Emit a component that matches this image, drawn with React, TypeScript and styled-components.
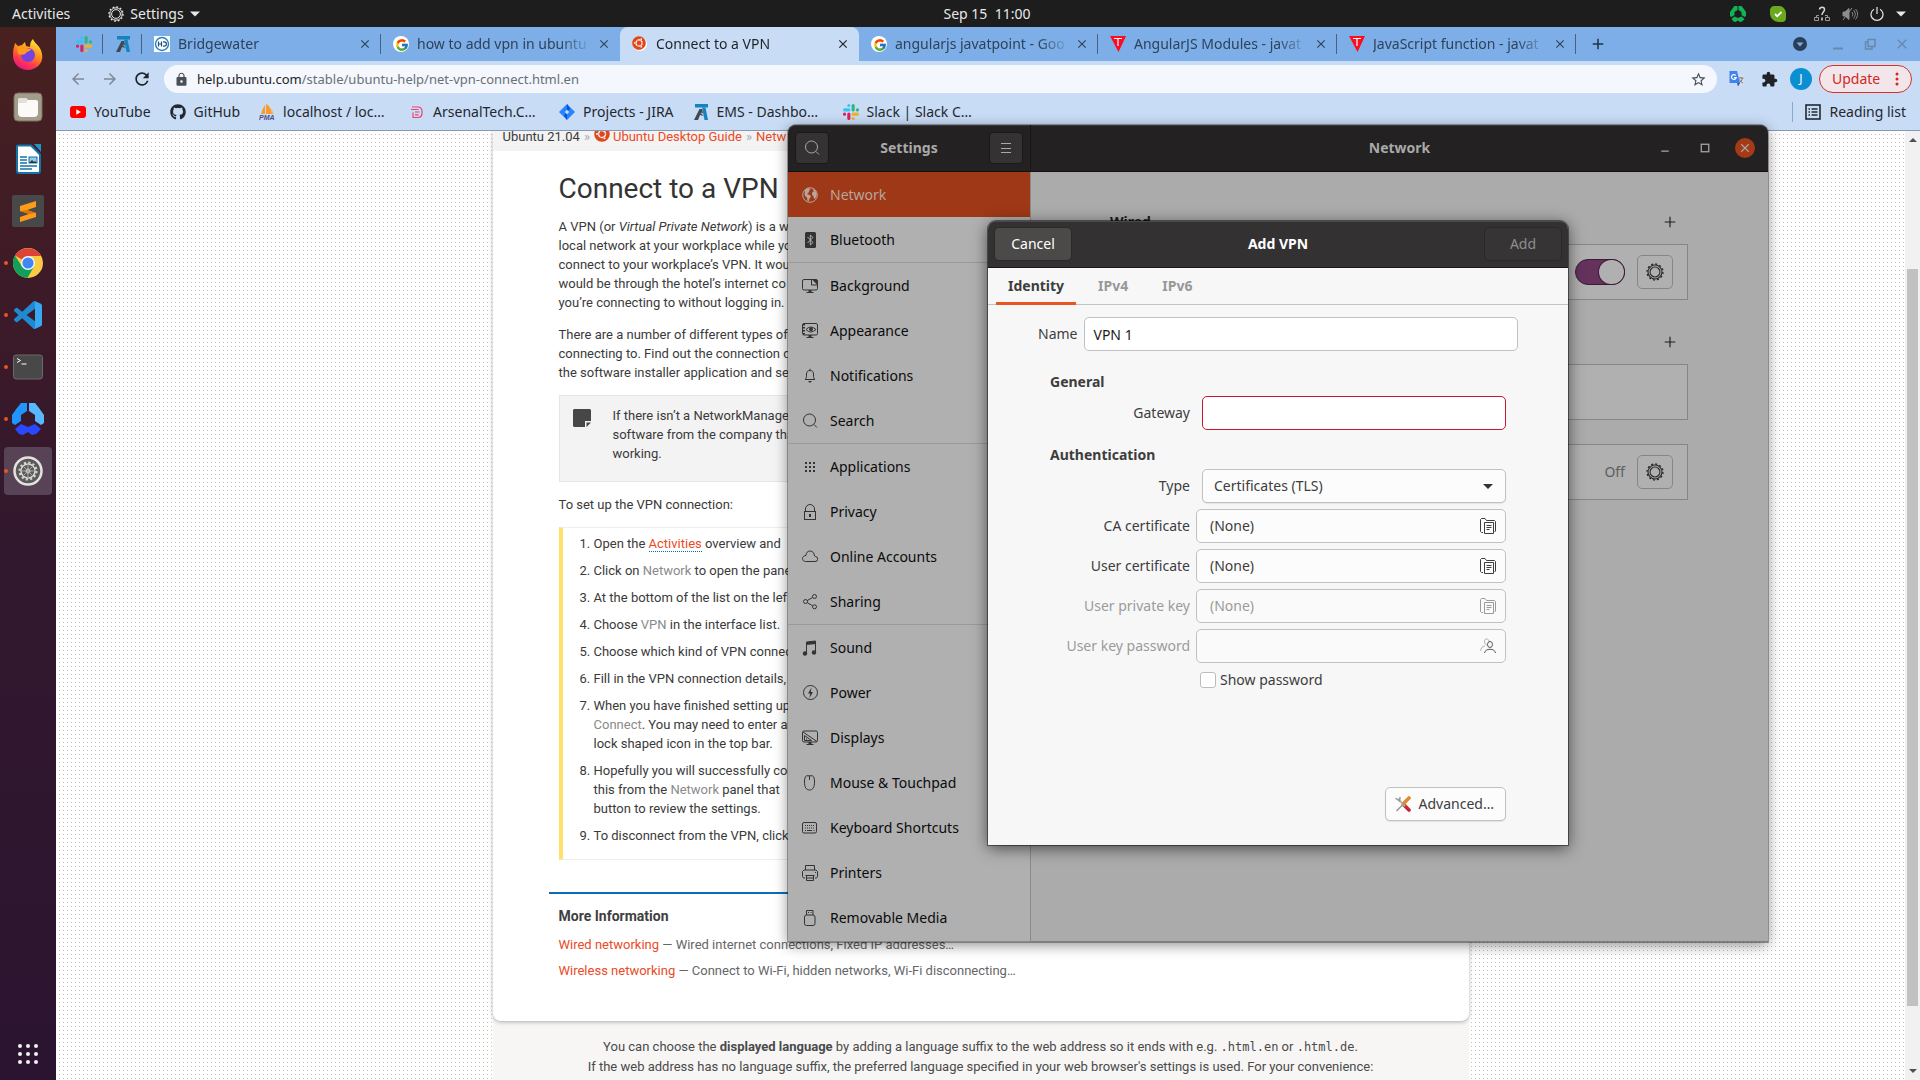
import React from 'react';
import styled, { createGlobalStyle, css } from 'styled-components';
import { FcGoogle } from 'react-icons/fc';
import { FaGithub, FaUbuntu } from 'react-icons/fa';
import {
  MdArrowBack,
  MdArrowForward,
  MdRefresh,
  MdLock,
  MdStarBorder,
  MdExtension,
  MdClose,
  MdAdd,
} from 'react-icons/md';

const ui = '"Noto Sans", "Open Sans", sans-serif';
const reading = 'Roboto, "Noto Sans", sans-serif';

const GlobalStyle = createGlobalStyle`
  * { box-sizing: border-box; }
  body { margin: 0; overflow: hidden; font: 14px/20px ${ui}; color: #3d3d3d; }
  button, input, select { font: inherit; color: inherit; margin: 0; }
  button { padding: 0; border: 0; background: none; }
  svg { display: block; flex: none; }
`;

/* ---------- desktop shell ---------- */

const Desktop = styled.div`
  position: relative;
  display: flex;
  flex-direction: column;
  height: 100vh;
  overflow: hidden;
`;

const TopBar = styled.header`
  display: grid;
  grid-template-columns: 1fr auto 1fr;
  align-items: center;
  height: 27px;
  flex: none;
  padding: 0 14px 0 12px;
  background: #1d1d1d;
  color: #e8e8e8;
`;

const BarGroup = styled.div<{ $gap: number; $end?: boolean }>`
  display: flex;
  align-items: center;
  gap: ${(p) => p.$gap}px;
  justify-content: ${(p) => (p.$end ? 'flex-end' : 'flex-start')};
`;

const BarButton = styled.button`
  display: flex;
  align-items: center;
  gap: 6px;
`;

const Clock = styled.time`
  margin-left: 56px;
  white-space: pre;
`;

const Body = styled.div`
  display: flex;
  flex: 1;
  min-height: 0;
`;

const Dock = styled.nav`
  display: flex;
  flex-direction: column;
  align-items: center;
  gap: 4px;
  width: 56px;
  flex: none;
  padding: 4px 0 2px;
  background: linear-gradient(#48211f, #3d1a28 25%, #32182e 50%, #2b1430);
`;

const DockItem = styled.button<{ $running?: boolean; $active?: boolean; $last?: boolean }>`
  position: relative;
  display: grid;
  place-items: center;
  width: 48px;
  height: 48px;
  border-radius: 4px;
  background: ${(p) => (p.$active ? '#584356' : 'transparent')};
  ${(p) => p.$last && css`margin-top: auto;`}
  ${(p) =>
    p.$running &&
    css`
      &::before {
        content: '';
        position: absolute;
        left: 0;
        top: 22px;
        width: 4px;
        height: 4px;
        border-radius: 2px;
        background: #e95420;
      }
    `}
`;

/* ---------- browser ---------- */

const Browser = styled.section`
  display: flex;
  flex-direction: column;
  flex: 1;
  min-width: 0;
  background: #c9dcf6;
`;

const TabStrip = styled.div`
  display: flex;
  height: 34px;
  flex: none;
  padding-left: 8px;
  background: #7eaee7;
`;

const Tab = styled.div<{ $active?: boolean; $pinned?: boolean; $line?: boolean }>`
  position: relative;
  display: flex;
  align-items: center;
  gap: 8px;
  width: ${(p) => (p.$pinned ? 39 : 239)}px;
  padding: 0 8px 0 12px;
  color: ${(p) => (p.$active ? '#1f2328' : '#2e4259')};
  background: ${(p) => (p.$active ? '#c9dcf6' : 'transparent')};
  border-radius: 8px 8px 0 0;
  ${(p) =>
    p.$line &&
    css`
      &::after {
        content: '';
        position: absolute;
        right: 0;
        top: 7px;
        width: 1px;
        height: 20px;
        background: #46617f;
      }
    `}
`;

const TabTitle = styled.span`
  flex: 1;
  min-width: 0;
  overflow: hidden;
  white-space: nowrap;
  mask-image: linear-gradient(90deg, #000 82%, transparent);
`;

const TabClose = styled.button`
  display: grid;
  place-items: center;
  width: 16px;
  height: 16px;
  margin-left: -4px;
`;

const NewTab = styled.button`
  display: grid;
  place-items: center;
  width: 44px;
  color: #1f3248;
`;

const WindowControls = styled.div`
  display: flex;
  align-items: center;
  gap: 16px;
  margin-left: auto;
  padding-right: 10px;
  color: #6787ad;
`;

const TabSearch = styled.button`
  margin-right: 6px;
`;

const Toolbar = styled.div`
  display: flex;
  align-items: center;
  height: 36px;
  flex: none;
  padding: 0 8px 0 12px;
`;

const NavButton = styled.button<{ $dim?: boolean }>`
  display: grid;
  place-items: center;
  width: 20px;
  height: 20px;
  margin-right: 12px;
  color: ${(p) => (p.$dim ? '#7f8894' : '#1f2328')};
`;

const Omnibox = styled.div`
  display: flex;
  align-items: center;
  gap: 8px;
  flex: 1;
  height: 28px;
  padding: 0 10px;
  border-radius: 14px;
  background: #f4f7fd;
  color: #4b5056;
  font-size: 13px;
`;

const Address = styled.a`
  flex: 1;
  color: #6a6f76;
  text-decoration: none;
  b { font-weight: 400; color: #1f2328; }
`;

const ToolbarEnd = styled.div`
  display: flex;
  align-items: center;
  gap: 12px;
  margin-left: 12px;
  > :first-child { margin-right: 4px; }
`;

const Avatar = styled.button`
  width: 22px;
  height: 22px;
  border-radius: 11px;
  background: #0a8fd3;
  color: #fff;
  font-size: 12px;
  line-height: 22px;
`;

const Update = styled.button`
  display: flex;
  align-items: center;
  justify-content: space-between;
  width: 93px;
  height: 28px;
  margin-left: -5px;
  padding: 0 12px;
  border: 1px solid #d93025;
  border-radius: 14px;
  background: #f3e6ea;
  color: #d0281e;
`;

const Bookmarks = styled.div`
  display: flex;
  align-items: center;
  gap: 19px;
  height: 34px;
  flex: none;
  padding: 0 14px 4px;
  border-bottom: 1px solid #8598b4;
`;

const Bookmark = styled.a<{ $long?: boolean }>`
  display: flex;
  align-items: center;
  gap: 8px;
  width: ${(p) => (p.$long ? '131px' : 'auto')};
  color: #23282e;
  text-decoration: none;
  white-space: nowrap;
`;

const ReadingList = styled(Bookmark)`
  margin-left: auto;
  padding-left: 12px;
  border-left: 1px solid #93a6c2;
`;

/* ---------- help page ---------- */

const Viewport = styled.div`
  display: flex;
  flex: 1;
  min-height: 0;
`;

const Page = styled.main`
  flex: 1;
  min-width: 0;
  overflow: hidden;
  font: 13px/19px ${reading};
  color: #3a3a3a;
  background-color: #fff;
  background-image: linear-gradient(90deg, #fff 3px, transparent 3px),
    linear-gradient(#fff 3px, #c4c0bc 3px);
  background-size: 4px 4px;
`;

const Sheet = styled.div`
  width: 976px;
  margin: 0 auto;
  background: #f7f6f5;
`;

const Card = styled.article`
  padding-bottom: 34px;
  border-radius: 0 0 8px 8px;
  background: #fff;
  box-shadow: 0 1px 4px rgba(0, 0, 0, 0.3);
  white-space: nowrap;
`;

const Crumbs = styled.nav`
  display: flex;
  align-items: flex-start;
  gap: 4px;
  height: 20px;
  padding: 0 10px;
  overflow: hidden;
  line-height: 11px;
  background: #f3f3f3;
  svg { margin: -5px -1px 0 0; }
  i { font-style: normal; color: #aaa; }
`;

const Link = styled.a`
  color: #eb4a25;
  text-decoration: none;
`;

const GlossaryLink = styled(Link)`
  border-bottom: 1px dotted #0a68b8;
`;

const Gui = styled.span`
  color: #8a8a8a;
`;

const Article = styled.div`
  padding: 21px 66px 0;
`;

const H1 = styled.h1`
  margin: 0 0 11px;
  font-size: 28px;
  line-height: 34px;
  font-weight: 400;
  color: #333;
`;

const Para = styled.p`
  margin: 0 0 13px;
`;

const Note = styled.div`
  display: flex;
  align-items: flex-start;
  gap: 22px;
  height: 87px;
  margin-bottom: 13px;
  padding: 10px 13px;
  border: 1px solid #e5e5e5;
  background: #f3f3f3;
  svg { margin-top: 3px; }
`;

const Steps = styled.ol`
  display: flex;
  flex-direction: column;
  gap: 8px;
  margin: 0;
  padding: 6px 0 14px 31px;
  border: 1px solid #eee;
  border-left: 4px solid #ffe068;
`;

const More = styled.section`
  margin: 32px 56px 0;
  padding: 12px 10px 0;
  border-top: 2px solid #0d6cb6;
  color: #666;
`;

const MoreTitle = styled.h2`
  margin: 0 0 9px;
  font-size: 14px;
  line-height: 20px;
  color: #3f3f3f;
`;

const MoreItem = styled.p`
  margin: 0 0 7px;
`;

const LanguageNote = styled.footer`
  padding-top: 16px;
  line-height: 20px;
  text-align: center;
  color: #4a4a4a;
  code { font-family: "DejaVu Sans Mono", "Liberation Mono", monospace; font-size: 12px; }
`;

const ScrollBar = styled.div`
  display: flex;
  flex-direction: column;
  align-items: center;
  width: 15px;
  flex: none;
  padding: 6px 0;
  background: #f1f1f1;
`;

const ScrollThumb = styled.div`
  flex: 737;
  width: 11px;
  background: #c1c1c1;
`;

const ScrollGap = styled.div<{ $share: number }>`
  flex: ${(p) => p.$share};
`;

/* ---------- settings window ---------- */

const SettingsWindow = styled.section`
  position: absolute;
  left: 788px;
  top: 125px;
  width: 980px;
  border-radius: 8px 8px 0 0;
  background: #ababab;
  color: #0e0e0e;
  box-shadow: 0 0 0 1px rgba(0, 0, 0, 0.3), 0 3px 14px rgba(0, 0, 0, 0.45);
`;

const Header = styled.header`
  display: flex;
  height: 47px;
  border-radius: 8px 8px 0 0;
  border-bottom: 1px solid #121111;
  background: #232122;
  box-shadow: inset 0 1px #3a3839;
  color: #a9a9a9;
  font-weight: 700;
`;

const SideHeader = styled.div`
  display: flex;
  align-items: center;
  justify-content: space-between;
  width: 243px;
  padding: 0 7px;
  border-right: 1px solid #181717;
`;

const HeaderButton = styled.button`
  display: grid;
  place-items: center;
  width: 34px;
  height: 32px;
  border: 1px solid #1a1919;
  border-radius: 4px;
  background: #343233;
`;

const PanelHeader = styled.div`
  display: grid;
  grid-template-columns: 1fr auto 1fr;
  align-items: center;
  flex: 1;
  padding: 0 13px;
`;

const PanelTitle = styled.span`
  grid-column: 2;
`;

const HeaderControls = styled.div`
  display: flex;
  align-items: center;
  justify-content: flex-end;
  gap: 20px;
`;

const CloseWindow = styled.button`
  display: grid;
  place-items: center;
  width: 20px;
  height: 20px;
  border-radius: 10px;
  background: #a53a17;
`;

const SettingsBody = styled.div`
  display: flex;
`;

const Sidebar = styled.nav`
  width: 243px;
  padding-bottom: 1px;
  border-right: 1px solid #8b8b8b;
  border-bottom: 1px solid #8b8b8b;
  background: #b0b0b0;
`;

const SideRow = styled.a<{ $active?: boolean; $line?: boolean }>`
  display: flex;
  align-items: center;
  gap: 12px;
  height: ${(p) => (p.$line ? 46 : 45)}px;
  padding: 0 14px;
  border-bottom: ${(p) => (p.$line ? '1px solid #9a9a9a' : '0')};
  background: ${(p) => (p.$active ? '#9f3816' : 'transparent')};
  color: ${(p) => (p.$active ? '#b7a59e' : '#0b0b0b')};
  text-decoration: none;
  svg { color: ${(p) => (p.$active ? '#b7a59e' : '#333')}; }
`;

const Panel = styled.div`
  flex: 1;
  padding: 32px 80px 0 79px;
  border-bottom: 1px solid #7e7e7e;
`;

const SectionHead = styled.div`
  display: flex;
  align-items: center;
  justify-content: space-between;
  height: 36px;
  padding-right: 12px;
  margin-bottom: 4px;
  color: #1d1d1d;
  h3 { margin: 0; font-size: 14px; line-height: 20px; }
`;

const DeviceBox = styled.div`
  display: flex;
  align-items: center;
  justify-content: flex-end;
  gap: 12px;
  height: 56px;
  margin-bottom: 24px;
  padding-right: 14px;
  border: 1px solid #868686;
  background: #b0b0b0;
  color: #5e5e5e;
`;

const Switch = styled.input`
  appearance: none;
  display: flex;
  justify-content: flex-end;
  width: 50px;
  height: 26px;
  border: 1px solid #3c1b38;
  border-radius: 13px;
  background: #65325e;
  &::before {
    content: '';
    width: 25px;
    height: 24px;
    border-radius: 12px;
    background: #b0b0b0;
    box-shadow: 0 0 0 1px #3c1b38;
  }
`;

const GearButton = styled.button`
  display: grid;
  place-items: center;
  width: 36px;
  height: 34px;
  border: 1px solid #868686;
  border-radius: 5px;
  color: #2b2b2b;
`;

/* ---------- Add VPN dialog ---------- */

const Dialog = styled.form`
  position: absolute;
  left: calc(50% - 290px);
  top: 96px;
  width: 580px;
  border-radius: 8px 8px 0 0;
  background: #f7f7f7;
  color: #3d3d3d;
  box-shadow: 0 0 0 1px rgba(0, 0, 0, 0.45), 0 3px 16px rgba(0, 0, 0, 0.6);
`;

const DialogHeader = styled.header`
  display: grid;
  grid-template-columns: 1fr auto 1fr;
  align-items: center;
  height: 47px;
  padding: 0 6px;
  border-radius: 8px 8px 0 0;
  border-bottom: 1px solid #191717;
  background: #333132;
  box-shadow: inset 0 1px #4a4849;
  color: #fff;
  font-weight: 700;
`;

const DialogButton = styled.button<{ $end?: boolean }>`
  width: 78px;
  height: 34px;
  border: 1px solid #2a2828;
  border-radius: 5px;
  font-weight: 400;
  background: #4b4a48;
  justify-self: ${(p) => (p.$end ? 'end' : 'start')};
  &:disabled { background: #373435; color: #8f8e8d; }
`;

const Tabs = styled.div`
  display: flex;
  height: 37px;
  padding: 0 8px;
  border-bottom: 1px solid #c3c3c3;
`;

const DialogTab = styled.button<{ $active?: boolean }>`
  height: 37px;
  padding: 2px 12px 0;
  margin-right: 10px;
  font-weight: 700;
  color: ${(p) => (p.$active ? '#3d3d3d' : '#989898')};
  border-bottom: 3px solid ${(p) => (p.$active ? '#e95420' : 'transparent')};
`;

const NameRow = styled.div`
  display: flex;
  align-items: center;
  gap: 7px;
  padding: 12px 50px 21px;
  input { flex: 1; min-width: 0; color: #1a1a1a; }
`;

const field = css`
  height: 34px;
  border: 1px solid #c1c1c1;
  border-radius: 5px;
`;

const TextInput = styled.input<{ $invalid?: boolean }>`
  ${field}
  padding: 0 8px;
  background: #fff;
  outline: 0;
  ${(p) => p.$invalid && css`border-color: #c7162b;`}
  &:disabled { background: #fafafa; }
`;

const Form = styled.div`
  padding: 0 62px 24px;
`;

const Legend = styled.h4`
  margin: 0 0 4px;
  font-size: 14px;
  line-height: 20px;
`;

const Row = styled.div<{ $wide?: boolean; $dim?: boolean; $last?: boolean }>`
  display: grid;
  grid-template-columns: 140px 1fr;
  align-items: center;
  column-gap: ${(p) => (p.$wide ? 6 : 12)}px;
  margin-bottom: ${(p) => (p.$last ? 15 : 6)}px;
  color: ${(p) => (p.$dim ? '#9b9b9b' : '#3d3d3d')};
  > label { text-align: right; }
`;

const FieldBox = styled.div`
  position: relative;
  display: flex;
  > :first-child { flex: 1; min-width: 0; }
  > svg { position: absolute; right: 10px; top: 9px; pointer-events: none; }
`;

const Combo = styled.select`
  ${field}
  appearance: none;
  padding: 0 11px;
  background: #fcfcfc;
  box-shadow: 0 1px 1px rgba(0, 0, 0, 0.08);
`;

const FileButton = styled.button`
  ${field}
  display: flex;
  align-items: center;
  justify-content: space-between;
  padding: 0 9px 0 13px;
  background: #fcfcfc;
  &:disabled { color: #9b9b9b; background: #fafafa; }
`;

const CheckRow = styled.label`
  display: flex;
  align-items: center;
  gap: 4px;
  height: 20px;
  margin: 7px 0 97px 150px;
`;

const CheckBox = styled.input`
  appearance: none;
  width: 16px;
  height: 16px;
  border: 1px solid #bcbcbc;
  border-radius: 3px;
  background: #fff;
`;

const Advanced = styled.button`
  ${field}
  display: flex;
  align-items: center;
  gap: 8px;
  margin-left: auto;
  padding: 0 11px 0 9px;
  background: #fcfcfc;
  box-shadow: 0 1px 1px rgba(0, 0, 0, 0.08);
`;

/* ---------- drawings ---------- */

const Sym = ({ children, size = 16 }: { children: React.ReactNode; size?: number }) => (
  <svg width={size} height={size} viewBox="0 0 16 16" fill="none" stroke="currentColor" strokeWidth="1">
    {children}
  </svg>
);

const Gear = ({ size = 18 }: { size?: number }) => (
  <Sym size={size}>
    <circle cx="8" cy="8" r="4.4" />
    <circle cx="8" cy="8" r="6.2" />
    <circle cx="8" cy="8" r="7.1" strokeWidth="1.2" strokeDasharray="1.8 1.92" />
  </Sym>
);

const Caret = () => (
  <svg width="10" height="16" viewBox="0 0 10 16">
    <path d="M0 5.500h10l-5 5z" fill="currentColor" />
  </svg>
);

const symbols: Record<string, React.ReactNode> = {
  Network: (
    <>
      <circle cx="8" cy="8" r="7.3" />
      <path
        d="M3 3.200c1.500-1.600 3-2 4.500-1.800l1 1.200-1.600 1.200.2 1.400-1.800 1 .6 1.200 1.900.6 1.200 1.600-1.600 2.200-.8 2.600-1.200-.6-.4-3.200-1.800-1.400-.6-2zM10.500 2l2.600 1.200 1.800 3.600-.8 3.600-2 1.600-.8-3-1.400-1.600.4-2.200 1.600-.8z"
        fill="currentColor"
        stroke="none"
      />
    </>
  ),
  Bluetooth: (
    <>
      <rect x="3" y="0" width="11" height="16" rx="1.500" fill="currentColor" stroke="none" />
      <path d="M5.500 5l5.500 5.500L8.300 13V3L11 5.500 5.500 11" stroke="#b0b0b0" />
    </>
  ),
  Background: (
    <>
      <rect x=".5" y="1.500" width="15" height="10.500" rx="1.500" />
      <path d="M9.500 1.500V7h6" />
      <path d="M10 1.500h4.500l1 1V7z" fill="currentColor" stroke="none" />
      <path d="M6.500 12h3v2h2v1h-7v-1h2z" fill="currentColor" stroke="none" />
    </>
  ),
  Appearance: (
    <>
      <rect x=".5" y=".5" width="15" height="11.500" rx="1.500" />
      <path d="M2 1v11" strokeDasharray="1.500 1.500" strokeWidth="2" />
      <path d="M4 6.500q4.500-5 10 0q-5.500 5-10 0z" />
      <circle cx="9" cy="6.300" r="1.500" fill="currentColor" />
      <path d="M6.500 12h3v2h2v1h-7v-1h2z" fill="currentColor" stroke="none" />
    </>
  ),
  Notifications: (
    <>
      <path d="M3 11.500c1.500-1 1.500-2 1.500-5.500C4.500 3.500 6 2.500 8 2.500s3.500 1 3.500 3.500c0 3.500 0 4.500 1.500 5.500zM8 .8v1.700" />
      <path d="M6 13h4l-2 2z" fill="currentColor" stroke="none" />
    </>
  ),
  Search: (
    <>
      <circle cx="7.500" cy="7" r="6" />
      <path d="M12 11.500l3 3" />
    </>
  ),
  Applications: (
    <path
      d="M3 3h2v2H3zM7 3h2v2H7zM11 3h2v2h-2zM3 7h2v2H3zM7 7h2v2H7zM11 7h2v2h-2zM3 11h2v2H3zM7 11h2v2H7zM11 11h2v2h-2z"
      fill="currentColor"
      stroke="none"
    />
  ),
  Privacy: (
    <>
      <rect x="2.500" y="7.500" width="11" height="8" />
      <path d="M3.500 7.500V5a4.500 4.500 0 0 1 9 0v2.500" />
      <path d="M7 10h2v3H7z" fill="currentColor" stroke="none" />
    </>
  ),
  'Online Accounts': (
    <path d="M3.500 12.500h9.500a2.500 2.500 0 0 0 .5-5c-.4-.3-.8-.5-1-.5C12.500 4 10.500 2 8 2 5.500 2 4 4 4 6.500 2 6.500.5 8 .5 9.500s1 3 3 3z" />
  ),
  Sharing: (
    <>
      <circle cx="3.500" cy="7.500" r="2" />
      <circle cx="12.500" cy="2.500" r="2" />
      <circle cx="12.500" cy="12.800" r="2" />
      <path d="M5.300 6.500l5.300-3M5.300 8.700l5.300 3" />
    </>
  ),
  Sound: (
    <>
      <path d="M4.500 13V2l9-1v11" />
      <path d="M4 2l10-1v3L4 5z" fill="currentColor" stroke="none" />
      <circle cx="3" cy="13.500" r="2.200" fill="currentColor" stroke="none" />
      <circle cx="12" cy="12.500" r="2.200" fill="currentColor" stroke="none" />
    </>
  ),
  Power: (
    <>
      <circle cx="8.500" cy="7.500" r="7" />
      <path d="M9.500 2.500L6 8.500h2.200L7.500 13 11 7H8.800z" fill="currentColor" stroke="none" />
    </>
  ),
  Displays: (
    <>
      <rect x=".5" y="1" width="15" height="11" rx="1.500" />
      <path d="M1 2l14 9.500M2.500 10.500v-5l7 5zM4.500 8.500v1" />
      <path d="M6.500 12h3v2h2v1h-7v-1h2z" fill="currentColor" stroke="none" />
    </>
  ),
  'Mouse & Touchpad': (
    <path d="M4.500.8h6c1.500.7 2 3 2 6.200 0 5-1.500 8-5 8s-5-3-5-8c0-3.200.5-5.500 2-6.200zM7.500 1v4" />
  ),
  'Keyboard Shortcuts': (
    <>
      <rect x=".5" y="2.500" width="14" height="10.500" rx="1.500" />
      <path d="M3 5.500h10M3 8h10" strokeDasharray="1 1" />
      <path d="M3 10.500h1M5 10.500h5M11.500 10.500h1" />
    </>
  ),
  Printers: (
    <>
      <path d="M3.500 5V.5h9V5M3 13H1.500l-1-1.500v-5L2 5h12l1.500 1.500v5l-1 1.500H13" />
      <path d="M4.500 15.500v-5M11.500 15.500v-5M3.500 10.500h9M4.500 15.500h7M5 13h6M13 7.500h1" />
    </>
  ),
  'Removable Media': (
    <>
      <rect x="2.500" y="5" width="10.500" height="10.500" rx="2" />
      <path d="M4.500 5V.5h6.500V5M6 2.500h1M8.500 2.500h1" />
    </>
  ),
};

const Slack = () => (
  <svg width="16" height="16" viewBox="0 0 16 16">
    <g fill="#36c5f0"><rect x="0" y="4.300" width="7.400" height="3.100" rx="1.500" /><rect x="4.300" y="0" width="3.100" height="3.100" rx="1.500" /></g>
    <g fill="#2eb67d"><rect x="8.600" y="0" width="3.100" height="7.400" rx="1.500" /><rect x="12.900" y="4.300" width="3.100" height="3.100" rx="1.500" /></g>
    <g fill="#ecb22e"><rect x="8.600" y="8.600" width="7.400" height="3.100" rx="1.500" /><rect x="8.600" y="12.900" width="3.100" height="3.100" rx="1.500" /></g>
    <g fill="#e01e5a"><rect x="4.300" y="8.600" width="3.100" height="7.400" rx="1.500" /><rect x="0" y="8.600" width="3.100" height="3.100" rx="1.500" /></g>
  </svg>
);

const Arsenal = () => (
  <svg width="16" height="16" viewBox="0 0 16 16">
    <path d="M2 0h13v3.500H2z" fill="#1583bd" />
    <path d="M9 3.500h3.500l2.500 12.500h-3.500z" fill="#1583bd" />
    <path d="M6.500 5H9l1 4.500L8 8.500 5 16H1z" fill="#41484e" />
    <path d="M6 11l2-2 2.500 3-2.500-.8z" fill="#41484e" />
  </svg>
);

const Bridgewater = () => (
  <svg width="16" height="16" viewBox="0 0 16 16">
    <rect width="16" height="16" fill="#fff" />
    <circle cx="8" cy="8" r="6.500" fill="none" stroke="#2382c4" strokeWidth="1.400" />
    <path d="M4.500 5.500v5M4.500 8h3M7.500 5.500v5M9 5.800h1.200a2.200 2.200 0 0 1 0 4.400H9" fill="none" stroke="#1d4f7d" strokeWidth="1.200" />
  </svg>
);

const GoogleMark = () => (
  <svg width="16" height="16" viewBox="0 0 16 16">
    <circle cx="8" cy="8" r="8" fill="#fff" />
    <FcGoogle x="2" y="2" width="12" height="12" />
  </svg>
);

const UbuntuMark = () => (
  <svg width="16" height="16" viewBox="0 0 16 16">
    <circle cx="8" cy="8" r="7" fill="#fff" />
    <FaUbuntu x="0" y="0" width="16" height="16" color="#e2471c" />
  </svg>
);

const Javatpoint = () => (
  <svg width="16" height="16" viewBox="0 0 16 16">
    <path d="M0 0h16L8.500 16z" fill="#fb0c20" />
    <path d="M4 2.500h8M8 2.500V10" stroke="#fff" strokeWidth="1.200" />
  </svg>
);

const YouTube = () => (
  <svg width="16" height="16" viewBox="0 0 16 16">
    <rect y="2" width="16" height="12" rx="3" fill="#f00" />
    <path d="M6.300 5.300v5.400L11 8z" fill="#fff" />
  </svg>
);

const PhpMyAdmin = () => (
  <svg width="16" height="16" viewBox="0 0 16 16">
    <path d="M6 1v9H2C3 6 4.500 3 6 1zM7 0c4 2 5.500 6 6 10H7z" fill="#f79b2e" />
    <path d="M12 4l3 6h-2z" fill="#f9b766" />
    <text x="0" y="16" fontFamily="Liberation Sans, sans-serif" fontSize="7" fontWeight="700" fontStyle="italic" fill="#4a4d8a">PMA</text>
  </svg>
);

const ArsenalMail = () => (
  <svg width="16" height="16" viewBox="0 0 16 16" fill="none" stroke="#f0416c" strokeWidth="1.200">
    <path d="M3 3h6c5.500 0 5.500 10.500 0 10.500H4V8.500" />
    <path d="M2 5.500h7.500M6 8h4.500M6 10.800h3.500" />
  </svg>
);

const Jira = () => (
  <svg width="16" height="16" viewBox="0 0 16 16">
    <path d="M8 0l8 8-8 8-8-8z" fill="#2684ff" />
    <path d="M8 0l3 4.500L8 8z" fill="#0052cc" />
    <path d="M8 16l-3-4.500L8 8z" fill="#0052cc" />
    <path d="M8 5.800L10.200 8 8 10.200 5.800 8z" fill="#c9dcf6" />
  </svg>
);

const Translate = () => (
  <svg width="16" height="16" viewBox="0 0 16 16">
    <path d="M6 3.500h9.500V15H9z" fill="#d9dde3" />
    <path d="M9.500 7h5M12 6v1M13.500 7c-.5 2.500-2 4-3.500 5M10.500 8.500c.5 1.500 2 3 3.500 3.500" fill="none" stroke="#6b7a90" />
    <path d="M.5 0H8l3 12H.5z" fill="#3f83ef" />
    <path d="M8 12h3l-2 3.500z" fill="#2a56b8" />
    <path d="M6.800 4.500A2.400 2.400 0 1 0 7.200 6.500H5" fill="none" stroke="#fff" strokeWidth="1.200" />
  </svg>
);

const CircleTrio = ({ size, colors }: { size: number; colors: [string, string, string] }) => (
  <svg width={size} height={size} viewBox="0 0 32 32">
    <path d="M9 0h6v8l-6 4v6l-6 4-3-2v-8l5-7z" fill={colors[0]} />
    <path d="M17 0h6l4 5 5 7v8l-3 2-6-4v-6l-6-4z" fill={colors[1]} />
    <path d="M3 26l6-5 7 3 7-3 6 5-5 5-4 1-4-3-5 3-4-1z" fill={colors[2]} />
  </svg>
);

const Firefox = () => (
  <svg width="32" height="32" viewBox="0 0 32 32">
    <defs>
      <linearGradient id="fox" x1=".8" y1="0" x2=".3" y2="1">
        <stop offset="0" stopColor="#fff044" />
        <stop offset=".45" stopColor="#ff8a16" />
        <stop offset=".75" stopColor="#ff3750" />
        <stop offset="1" stopColor="#e31587" />
      </linearGradient>
    </defs>
    <path d="M2 8l1-4 3 3 4-1 3-3 1 4 4 1c0-4 1-6 3-8 1 4 8 7 9 15 2 9-6 16-14 16S1 25 1 17c0-4 0-6 1-9z" fill="url(#fox)" />
    <circle cx="16" cy="16" r="7" fill="#7542e5" />
    <path d="M5 8c4-2 8 0 9 1l5 1c-1 3-4 2-5 4-1 2-5 2-8 1z" fill="#ff9a1f" />
  </svg>
);

const Files = () => (
  <svg width="32" height="32" viewBox="0 0 32 32">
    <rect x="2" y="2" width="28" height="28" rx="4" fill="#a39d8c" stroke="#77705f" />
    <path d="M8 7h6l2 2h8a2 2 0 0 1 2 2v11a4 4 0 0 1-4 4H10a4 4 0 0 1-4-4V9z" fill="#fbfaf8" />
    <path d="M7 7h7l2 2-2 3H6V8z" fill="#e4e0d7" />
  </svg>
);

const Writer = () => (
  <svg width="32" height="32" viewBox="0 0 32 32">
    <path d="M6 2.500h13l9 9V28a2 2 0 0 1-2 2H7a2 2 0 0 1-2-2V3z" fill="#fff" stroke="#1573a8" strokeWidth="2" />
    <path d="M22 1h7v8z" fill="#1c97c8" />
    <path d="M8 14h7M8 17h7M8 20h7M8 23h17M8 26h12" stroke="#1573a8" strokeWidth="1.300" />
    <rect x="17" y="14" width="8" height="6" fill="#90cbe8" stroke="#1573a8" />
    <path d="M17 20l3-3 2 2 1-1 2 2z" fill="#333" />
  </svg>
);

const Sublime = () => (
  <svg width="32" height="32" viewBox="0 0 32 32">
    <rect width="32" height="32" rx="2" fill="#484848" />
    <path d="M8 11l16-5v6l-9 3 9 3v4L8 27v-5l9-3-9-3z" fill="#ff9a1a" />
    <path d="M8 16l9 3 7-1-9-3z" fill="#d97704" />
  </svg>
);

const Chrome = () => (
  <svg width="30" height="30" viewBox="0 0 30 30">
    <circle cx="15" cy="15" r="15" fill="#fbcb43" />
    <path d="M15 15L2 7.500A15 15 0 0 1 28 8H15z" fill="#db4437" />
    <path d="M2 7.500A15 15 0 0 0 14.500 30L21 18.500 15 15 9 18.500z" fill="#11a05c" />
    <circle cx="15" cy="15" r="7" fill="#f4f6f8" />
    <circle cx="15" cy="15" r="5.600" fill="#4285f4" />
  </svg>
);

const Code = () => (
  <svg width="28" height="28" viewBox="0 0 24 24">
    <path
      fill="#1f8ad2"
      d="M23.150 2.587L18.210.21a1.494 1.494 0 0 0-1.705.29l-9.460 8.630-4.120-3.128a.999.999 0 0 0-1.276.057L.327 7.261A1 1 0 0 0 .326 8.740L3.899 12 .326 15.260a1 1 0 0 0 .001 1.479L1.650 17.940a.999.999 0 0 0 1.276.057l4.120-3.128 9.460 8.630a1.492 1.492 0 0 0 1.704.29l4.942-2.377A1.500 1.500 0 0 0 24 20.060V3.939a1.500 1.500 0 0 0-.85-1.352zm-5.146 14.861L10.826 12l7.178-5.448v10.896z"
    />
    <path d="M18 .2l5.200 2.400.8 1.400v16l-.8 1.400L18 23.800z" fill="#36a9f2" />
  </svg>
);

const Terminal = () => (
  <svg width="30" height="26" viewBox="0 0 30 26">
    <rect x=".5" y="1" width="29" height="24" rx="2.500" fill="#484848" stroke="#6a6a6a" />
    <path d="M4 4.500l3.500 2L4 8.500M8.500 10h5" stroke="#fff" fill="none" />
  </svg>
);

const SettingsApp = () => (
  <svg width="30" height="30" viewBox="0 0 30 30" fill="none">
    <circle cx="15" cy="15" r="13.500" fill="#5a5a5a" stroke="#e4e2df" strokeWidth="2.500" />
    <circle cx="15" cy="15" r="7" stroke="#d9d7d4" strokeWidth="1.500" />
    <circle cx="15" cy="15" r="8.500" stroke="#d9d7d4" strokeWidth="2" strokeDasharray="2.200 2.250" />
    <circle cx="15" cy="15" r="2.500" fill="#d9d7d4" />
    <path d="M15 8v14M8 15h14M10 10l10 10M20 10L10 20" stroke="#a9a7a5" />
  </svg>
);

const AppGrid = () => (
  <svg width="22" height="22" viewBox="0 0 22 22" fill="#f2f2f2">
    {[3, 11, 19].flatMap((y) => [3, 11, 19].map((x) => <circle key={`${x}-${y}`} cx={x} cy={y} r="2" />))}
  </svg>
);

const DocIcon = () => (
  <Sym>
    <path d="M3 14.500H1.500l-1-1V1.500l1-1H5l1.500 2h8l1 1V13l-1 1" />
    <path d="M4.500 4.500h9v11h-9z" />
    <path d="M6.500 7.500h5M6.500 9.500h5M6.500 11.500h3" />
  </Sym>
);

const PeopleIcon = () => (
  <Sym>
    <g opacity=".8"><path d="M7 7C4 6.500 3.500 1 6.500 1c2 0 2.500 1.500 2.500 2.500M.8 13c0-3 1.500-5 4.200-5" /></g>
    <ellipse cx="10" cy="6.500" rx="2.500" ry="3" stroke="#555" />
    <path d="M4.500 15c.5-5 10.500-5 11 0" stroke="#555" />
  </Sym>
);

const Tools = () => (
  <svg width="16" height="16" viewBox="0 0 16 16" fill="none" strokeLinecap="round">
    <path d="M8.500 8.500l5.500 5.500" stroke="#c9252d" strokeWidth="3.600" />
    <path d="M3.500 3.500l6 6" stroke="#b5b5b5" strokeWidth="2" />
    <path d="M1 2.500L4.500 5 5 1.500" stroke="#9a9a9a" strokeWidth="1.500" />
    <path d="M2 14.500l6-6" stroke="#9b9b9b" strokeWidth="1.600" />
    <path d="M9 7l5-5" stroke="#e08a2c" strokeWidth="3.600" />
  </svg>
);

/* ---------- content ---------- */

const tabs = [
  { id: 1, icon: <Bridgewater />, title: 'Bridgewater', line: true },
  { id: 2, icon: <GoogleMark />, title: 'how to add vpn in ubuntu' },
  { id: 3, icon: <UbuntuMark />, title: 'Connect to a VPN', active: true },
  { id: 4, icon: <GoogleMark />, title: 'angularjs javatpoint - Goo', line: true },
  { id: 5, icon: <Javatpoint />, title: 'AngularJS Modules - javat', line: true },
  { id: 6, icon: <Javatpoint />, title: 'JavaScript function - javat', line: true },
];

const bookmarks = [
  { icon: <YouTube />, label: 'YouTube' },
  { icon: <FaGithub size={16} />, label: 'GitHub' },
  { icon: <PhpMyAdmin />, label: 'localhost / loc…' },
  { icon: <ArsenalMail />, label: 'ArsenalTech.C…' },
  { icon: <Jira />, label: 'Projects - JIRA' },
  { icon: <Arsenal />, label: 'EMS - Dashbo…' },
  { icon: <Slack />, label: 'Slack | Slack C…' },
];

const groupEnds = ['Bluetooth', 'Search', 'Sharing'];

const dock = [
  { name: 'Firefox', icon: <Firefox /> },
  { name: 'Files', icon: <Files /> },
  { name: 'Writer', icon: <Writer /> },
  { name: 'Sublime Text', icon: <Sublime /> },
  { name: 'Chrome', icon: <Chrome />, running: true },
  { name: 'Code', icon: <Code />, running: true },
  { name: 'Terminal', icon: <Terminal />, running: true },
  { name: 'Hubstaff', icon: <CircleTrio size={32} colors={['#1f96ff', '#58b8ff', '#2948ff']} />, running: true },
  { name: 'Settings', icon: <SettingsApp />, running: true, active: true },
];

function HelpPage() {
  return (
    <Page>
      <Sheet>
        <Card>
          <Crumbs>
            <span>Ubuntu 21.04</span>
            <i>»</i>
            <FaUbuntu size={16} color="#e2471c" />
            <Link href="#guide">Ubuntu Desktop Guide</Link>
            <i>»</i>
            <Link href="#network">Netw</Link>
          </Crumbs>
          <Article>
            <H1>Connect to a VPN</H1>
            <Para>
              A VPN (or <em>Virtual Private Network</em>) is a w<br />
              local network at your workplace while yo<br />
              connect to your workplace’s VPN. It wou<br />
              would be through the hotel’s internet co<br />
              you’re connecting to without logging in.
            </Para>
            <Para>
              There are a number of different types of<br />
              connecting to. Find out the connection d<br />
              the software installer application and se
            </Para>
            <Note>
              <svg width="18" height="18" viewBox="0 0 18 18">
                <path d="M1 0h16l1 1v11h-6v6H1l-1-1V1z" fill="#474747" />
                <path d="M13.500 13.500H18L13.500 18z" fill="#474747" />
              </svg>
              <span>
                If there isn’t a NetworkManage<br />
                software from the company tha<br />
                working.
              </span>
            </Note>
            <Para>To set up the VPN connection:</Para>
            <Steps>
              <li>Open the <GlossaryLink href="#activities">Activities</GlossaryLink> overview and</li>
              <li>Click on <Gui>Network</Gui> to open the pane</li>
              <li>At the bottom of the list on the lef</li>
              <li>Choose <Gui>VPN</Gui> in the interface list.</li>
              <li>Choose which kind of VPN connec</li>
              <li>Fill in the VPN connection details,</li>
              <li>
                When you have finished setting up<br />
                <Gui>Connect</Gui>. You may need to enter a<br />
                lock shaped icon in the top bar.
              </li>
              <li>
                Hopefully you will successfully con<br />
                this from the <Gui>Network</Gui> panel that<br />
                button to review the settings.
              </li>
              <li>To disconnect from the VPN, click</li>
            </Steps>
          </Article>
          <More>
            <MoreTitle>More Information</MoreTitle>
            <MoreItem><Link href="#wired">Wired networking</Link> — Wired internet connections, Fixed IP addresses…</MoreItem>
            <MoreItem><Link href="#wireless">Wireless networking</Link> — Connect to Wi-Fi, hidden networks, Wi-Fi disconnecting…</MoreItem>
          </More>
        </Card>
        <LanguageNote>
          You can choose the <b>displayed language</b> by adding a language suffix to the web address so it ends with e.g.{' '}
          <code>.html.en</code> or <code>.html.de</code>.<br />
          If the web address has no language suffix, the preferred language specified in your web browser's settings is used. For your convenience:<br />
          [ <Link href="#english">Change to English Language</Link> | <Link href="#browser">Change to Language Selected by Browser</Link> ]
        </LanguageNote>
      </Sheet>
    </Page>
  );
}

function AddVpn() {
  return (
    <Dialog onSubmit={(e) => e.preventDefault()}>
      <DialogHeader>
        <DialogButton type="button">Cancel</DialogButton>
        <span>Add VPN</span>
        <DialogButton $end disabled>Add</DialogButton>
      </DialogHeader>
      <Tabs>
        <DialogTab type="button" $active>Identity</DialogTab>
        <DialogTab type="button">IPv4</DialogTab>
        <DialogTab type="button">IPv6</DialogTab>
      </Tabs>
      <NameRow>
        <label htmlFor="name">Name</label>
        <TextInput id="name" defaultValue="VPN 1" />
      </NameRow>
      <Form>
        <Legend>General</Legend>
        <Row $last>
          <label htmlFor="gateway">Gateway</label>
          <TextInput id="gateway" $invalid />
        </Row>
        <Legend>Authentication</Legend>
        <Row>
          <label htmlFor="type">Type</label>
          <FieldBox>
            <Combo id="type"><option>Certificates (TLS)</option></Combo>
            <svg width="16" height="16" viewBox="0 0 16 16"><path d="M3 6h10l-5 5z" fill="#333" /></svg>
          </FieldBox>
        </Row>
        <Row $wide>
          <label htmlFor="ca">CA certificate</label>
          <FileButton id="ca" type="button">(None)<DocIcon /></FileButton>
        </Row>
        <Row $wide>
          <label htmlFor="cert">User certificate</label>
          <FileButton id="cert" type="button">(None)<DocIcon /></FileButton>
        </Row>
        <Row $wide $dim>
          <label htmlFor="key">User private key</label>
          <FileButton id="key" type="button" disabled>(None)<DocIcon /></FileButton>
        </Row>
        <Row $wide $dim>
          <label htmlFor="password">User key password</label>
          <FieldBox>
            <TextInput id="password" type="password" disabled />
            <PeopleIcon />
          </FieldBox>
        </Row>
        <CheckRow><CheckBox type="checkbox" />Show password</CheckRow>
        <Advanced type="button"><Tools />Advanced…</Advanced>
      </Form>
    </Dialog>
  );
}

function AddButton() {
  return (
    <button aria-label="Add">
      <Sym size={12}><path d="M8 1v14M1 8h14" strokeWidth="1.500" /></Sym>
    </button>
  );
}

function Settings() {
  return (
    <SettingsWindow>
      <Header>
        <SideHeader>
          <HeaderButton aria-label="Search"><Sym>{symbols.Search}</Sym></HeaderButton>
          <span>Settings</span>
          <HeaderButton aria-label="Menu">
            <Sym><path d="M3 3.500h10M3 8.500h10M3 12.500h10" /></Sym>
          </HeaderButton>
        </SideHeader>
        <PanelHeader>
          <PanelTitle>Network</PanelTitle>
          <HeaderControls>
            <button aria-label="Minimize"><Sym size={20}><path d="M5 10.500h6" /></Sym></button>
            <button aria-label="Maximize"><Sym size={20}><rect x="5" y="5" width="6" height="6" /></Sym></button>
            <CloseWindow aria-label="Close"><Sym size={12}><path d="M3 3l10 10M13 3L3 13" strokeWidth="1.500" /></Sym></CloseWindow>
          </HeaderControls>
        </PanelHeader>
      </Header>
      <SettingsBody>
        <Sidebar>
          {Object.entries(symbols).map(([name, icon]) => (
            <SideRow key={name} href="#panel" $active={name === 'Network'} $line={groupEnds.includes(name)}>
              <Sym>{icon}</Sym>
              {name}
            </SideRow>
          ))}
        </Sidebar>
        <Panel>
          <SectionHead><h3>Wired</h3><AddButton /></SectionHead>
          <DeviceBox>
            <Switch type="checkbox" role="switch" aria-label="Wired" defaultChecked />
            <GearButton aria-label="Wired options"><Gear /></GearButton>
          </DeviceBox>
          <SectionHead><span /><AddButton /></SectionHead>
          <DeviceBox />
          <DeviceBox>
            <span>Off</span>
            <GearButton aria-label="Proxy options"><Gear /></GearButton>
          </DeviceBox>
        </Panel>
      </SettingsBody>
      <AddVpn />
    </SettingsWindow>
  );
}

export default function App() {
  return (
    <Desktop>
      <GlobalStyle />
      <TopBar>
        <BarGroup $gap={38}>
          <BarButton>Activities</BarButton>
          <BarButton><Gear size={16} />Settings<Caret /></BarButton>
        </BarGroup>
        <Clock>{'Sep 15  11:00'}</Clock>
        <BarGroup $gap={28} $end>
          <BarGroup $gap={24}>
            <CircleTrio size={16} colors={['#12b357', '#12b357', '#12b357']} />
            <svg width="16" height="16" viewBox="0 0 16 16">
              <path d="M4 0h6c4 1 6 4 6 8v4c0 3-2 4-4 4H8C3 15 0 12 0 7V4c0-2 2-4 4-4z" fill="#6aa81d" />
              <path d="M5 8l2.200 2.200L11.500 6" fill="none" stroke="#fff" strokeWidth="1.800" />
            </svg>
          </BarGroup>
          <BarGroup $gap={12}>
            <svg width="16" height="16" viewBox="0 0 16 16" fill="none" stroke="#9a9a9a">
              <path d="M.5 11.500h4v3h-4zM11.500 11.500h4v3h-4zM2.500 11V9.500H5M13.500 11V9.500H11" />
              <path d="M5.500 3.500C6 .5 10.500.5 10.500 3.500 10.500 6 8 6 8 9M8 11.500v3" stroke="#d8d8d8" strokeWidth="1.500" />
            </svg>
            <svg width="16" height="16" viewBox="0 0 16 16" fill="none" stroke="#8d8d8d">
              <path d="M1 6h2l4-3.500v11L3 10H1z" fill="#8d8d8d" />
              <path d="M1 14L10 2M10 6c1 1.500 1 3 0 4.500M11.500 4c2.500 2.500 2 6 0 8.500M13.500 3c3 3 2.500 7.500 0 10.500" />
            </svg>
            <svg width="14" height="16" viewBox="0 0 14 16" fill="none" stroke="#e8e8e8" strokeWidth="1.200">
              <path d="M7 1v7M4 3.200a6 6 0 1 0 6 0" />
            </svg>
            <Caret />
          </BarGroup>
        </BarGroup>
      </TopBar>
      <Body>
        <Dock>
          {dock.map((d) => (
            <DockItem key={d.name} aria-label={d.name} $running={d.running} $active={d.active}>{d.icon}</DockItem>
          ))}
          <DockItem aria-label="Show applications" $last><AppGrid /></DockItem>
        </Dock>
        <Browser>
          <TabStrip>
            <Tab $pinned $line><Slack /></Tab>
            <Tab $pinned $line><Arsenal /></Tab>
            {tabs.map((t) => (
              <Tab key={t.id} $active={t.active} $line={t.line}>
                {t.icon}
                <TabTitle>{t.title}</TabTitle>
                <TabClose aria-label="Close tab"><MdClose size={14} /></TabClose>
              </Tab>
            ))}
            <NewTab aria-label="New tab"><MdAdd size={18} /></NewTab>
            <WindowControls>
              <TabSearch aria-label="Search tabs">
                <svg width="16" height="16" viewBox="0 0 16 16"><circle cx="8" cy="8" r="7" fill="#2a3f57" /><path d="M4.500 6.500h7L8 10.500z" fill="#7eaee7" /></svg>
              </TabSearch>
              <Sym><path d="M3 12.500h10" strokeWidth="2" /></Sym>
              <Sym><path d="M6 3.500h7v7H6zM6 6H3.500v7H10v-2.500" strokeWidth="1.500" /></Sym>
              <MdClose size={16} />
            </WindowControls>
          </TabStrip>
          <Toolbar>
            <NavButton $dim aria-label="Back"><MdArrowBack size={18} /></NavButton>
            <NavButton $dim aria-label="Forward"><MdArrowForward size={18} /></NavButton>
            <NavButton aria-label="Reload"><MdRefresh size={20} /></NavButton>
            <Omnibox>
              <MdLock size={15} />
              <Address href="#address"><b>help.ubuntu.com</b>/stable/ubuntu-help/net-vpn-connect.html.en</Address>
              <MdStarBorder size={17} />
            </Omnibox>
            <ToolbarEnd>
              <Translate />
              <MdExtension size={17} color="#1f2328" />
              <Avatar>J</Avatar>
              <Update>Update<svg width="4" height="14" viewBox="0 0 4 14" fill="#d0281e"><circle cx="2" cy="2" r="1.500" /><circle cx="2" cy="7" r="1.500" /><circle cx="2" cy="12" r="1.500" /></svg></Update>
            </ToolbarEnd>
          </Toolbar>
          <Bookmarks>
            {bookmarks.map((b) => (
              <Bookmark key={b.label} href="#bookmark" $long={b.label.endsWith('…')}>{b.icon}{b.label}</Bookmark>
            ))}
            <ReadingList href="#reading">
              <Sym><rect x="1" y="1" width="14" height="14" strokeWidth="1.600" /><path d="M3.500 5h1.500M3.500 8h1.500M3.500 11h1.500M6.500 5h6M6.500 8h6M6.500 11h6" strokeWidth="1.500" /></Sym>
              Reading list
            </ReadingList>
          </Bookmarks>
          <Viewport>
            <HelpPage />
            <ScrollBar>
              <svg width="8" height="5" viewBox="0 0 8 5"><path d="M0 5l4-4 4 4z" fill="#505050" /></svg>
              <ScrollGap $share={127} />
              <ScrollThumb />
              <ScrollGap $share={63} />
              <svg width="8" height="5" viewBox="0 0 8 5"><path d="M0 0l4 4 4-4z" fill="#505050" /></svg>
            </ScrollBar>
          </Viewport>
        </Browser>
      </Body>
      <Settings />
    </Desktop>
  );
}
